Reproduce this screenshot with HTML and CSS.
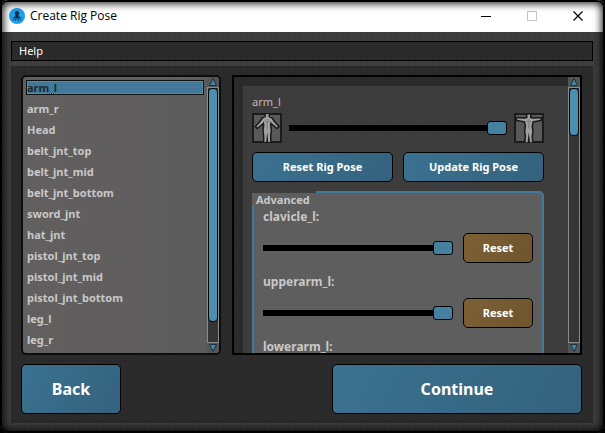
FILE: index.html
```html
<!DOCTYPE html>
<html lang="en">
<head>
<meta charset="utf-8">
<title>Create Rig Pose</title>
<link rel="stylesheet" href="styles.css">
</head>
<body>
<div class="window">
  <header class="titlebar">
    <svg class="logo" viewBox="0 0 16 16" aria-hidden="true">
      <circle cx="8" cy="8" r="8" fill="#1ba1ee"/>
      <path d="M8 3a2.300 2.300 0 0 0-2 3.500L6.800 8 5 10.500h6L9.200 8l.8-1.500A2.300 2.300 0 0 0 8 3Z" fill="#0b3048"/>
      <path d="M6.500 8.500 3.500 10M9.500 8.500l3 1.500M4 12.500l1.500-2M6.500 13l.5-2.500M9.500 13 9 10.500M12 12.500l-1.500-2" stroke="#0b405f" stroke-width="1"/>
    </svg>
    <h1 class="title">Create Rig Pose</h1>
    <button class="winbtn" aria-label="Minimize"><svg viewBox="0 0 11 11"><path d="M0 5.500h10" stroke="#000"/></svg></button>
    <button class="winbtn" aria-label="Maximize" disabled><svg viewBox="0 0 11 11"><path d="M.5.500h9v9h-9z" fill="none" stroke="#c4c4c4"/></svg></button>
    <button class="winbtn" aria-label="Close"><svg viewBox="0 0 11 11"><path d="M.5.500l9 9M9.500.500l-9 9" stroke="#000" stroke-width="1.200"/></svg></button>
  </header>
  <nav class="menubar"><button class="menu">Help</button></nav>
  <main class="panel">
    <div class="columns">
      <section class="joints">
        <ul class="list" role="listbox" aria-label="Joints">
          <li class="item selected" role="option" aria-selected="true"><span>arm_l</span></li>
          <li class="item" role="option">arm_r</li>
          <li class="item" role="option">Head</li>
          <li class="item" role="option">belt_jnt_top</li>
          <li class="item" role="option">belt_jnt_mid</li>
          <li class="item" role="option">belt_jnt_bottom</li>
          <li class="item" role="option">sword_jnt</li>
          <li class="item" role="option">hat_jnt</li>
          <li class="item" role="option">pistol_jnt_top</li>
          <li class="item" role="option">pistol_jnt_mid</li>
          <li class="item" role="option">pistol_jnt_bottom</li>
          <li class="item" role="option">leg_l</li>
          <li class="item" role="option">leg_r</li>
        </ul>
        <div class="scroll" aria-hidden="true">
          <svg class="arrow" viewBox="0 0 12 10"><path d="M6 1.500 9.500 8.500h-7z"/></svg>
          <div class="track"><div class="thumb long"></div></div>
          <svg class="arrow" viewBox="0 0 12 10"><path d="M6 8.500 2.500 1.500h7z"/></svg>
        </div>
      </section>
      <section class="editor">
        <div class="view">
          <div class="content">
            <label class="pose-name" for="pose">arm_l</label>
            <div class="pose-row">
              <svg class="figure" viewBox="0 0 30 30" aria-hidden="true">
                <path class="frame" d="M1 1h28v28H1z"/>
                <path class="outline" d="M14 1h2.500v3l3 1.500 2 3 4.500 5-1 1-5-4-1.500-2-.5 4 .7 5-.7 5v6.500h-1.800l-1-10-1 10h-1.800v-6.500l-.7-5 .7-5-.5-4-1.500 2-5 4-1-1 4.500-5 2-3 3-1.500z"/>
                <path class="body" d="M14 1h2.500v3l3 1.500 2 3 4.500 5-1 1-5-4-1.500-2-.5 4 .7 5-.7 5v6.500h-1.800l-1-10-1 10h-1.800v-6.500l-.7-5 .7-5-.5-4-1.500 2-5 4-1-1 4.500-5 2-3 3-1.500z"/>
                <path class="shade" d="M15.200 6v10M12.500 8l2.500 1 3-1"/>
              </svg>
              <input class="slider" id="pose" type="range" min="0" max="100" value="100">
              <svg class="figure" viewBox="0 0 30 30" aria-hidden="true">
                <path class="frame" d="M1 1h28v28H1z"/>
                <path class="outline" d="M13.500 1.500H16v3.500l2.500.7 8-.2v1.200l-8 1.500-1 5 .7 5-.7 5 .5 6h-2l-1.200-10-1.200 10h-2l.5-6-.7-5 .7-5-1-5-8-1.500V5.500l8 .2 2.400-.7z"/>
                <path class="body" d="M13.500 1.500H16v3.500l2.500.7 8-.2v1.200l-8 1.500-1 5 .7 5-.7 5 .5 6h-2l-1.200-10-1.200 10h-2l.5-6-.7-5 .7-5-1-5-8-1.500V5.500l8 .2 2.400-.7z"/>
                <path class="shade" d="M14.800 6v10M12.300 8l2.500 1 2.500-1"/>
              </svg>
            </div>
            <div class="actions">
              <button class="btn">Reset Rig Pose</button>
              <button class="btn">Update Rig Pose</button>
            </div>
            <div class="group" role="group" aria-labelledby="adv">
              <h2 class="group-title" id="adv">Advanced</h2>
              <div class="control">
                <label for="clavicle">clavicle_l:</label>
                <div class="control-row"><input class="slider" id="clavicle" type="range" min="0" max="100" value="100"><button class="btn reset">Reset</button></div>
              </div>
              <div class="control">
                <label for="upperarm">upperarm_l:</label>
                <div class="control-row"><input class="slider" id="upperarm" type="range" min="0" max="100" value="100"><button class="btn reset">Reset</button></div>
              </div>
              <div class="control">
                <label for="lowerarm">lowerarm_l:</label>
                <div class="control-row"><input class="slider" id="lowerarm" type="range" min="0" max="100" value="100"></div>
              </div>
            </div>
          </div>
        </div>
        <div class="scroll" aria-hidden="true">
          <svg class="arrow" viewBox="0 0 12 10"><path d="M6 1.500 9.500 8.500h-7z"/></svg>
          <div class="track"><div class="thumb short"></div></div>
          <svg class="arrow" viewBox="0 0 12 10"><path d="M6 8.500 2.500 1.500h7z"/></svg>
        </div>
      </section>
    </div>
    <footer class="footer">
      <button class="btn big back">Back</button>
      <button class="btn big continue">Continue</button>
    </footer>
  </main>
</div>
</body>
</html>
```
FILE: styles.css
```css
* { box-sizing: border-box; }

body {
  margin: 0;
  background: #000;
  font: 12px/16px "Noto Sans", "Open Sans", sans-serif;
  color: #c8c8c8;
}

button { font: inherit; color: inherit; padding: 0; border: 0; background: none; }

.window {
  position: relative;
  display: flex;
  flex-direction: column;
  height: 100vh;
  padding: 0 3px;
  background:
    repeating-linear-gradient(0deg, rgba(0, 0, 0, .07) 0 1px, transparent 1px 6px),
    repeating-linear-gradient(90deg, rgba(0, 0, 0, .07) 0 1px, transparent 1px 6px),
    #3e3e3e;
}

/* dark vignette around the window frame */
.window::after {
  content: "";
  position: absolute;
  inset: 0;
  pointer-events: none;
  border: 2px solid #000;
  border-radius: 8px;
  box-shadow: inset 0 0 8px 1px #000, 0 0 0 8px #000;
}

.titlebar {
  display: flex;
  align-items: center;
  height: 32px;
  padding: 0 2px 0 7px;
  margin: 0 -1px;
  background: #fff;
  color: #000;
}
.logo { width: 16px; height: 16px; margin-right: 5px; }
.title { flex: 1; margin: 0; font-family: "Open Sans", sans-serif; font-size: 12px; font-weight: 400; }
.winbtn { width: 46px; height: 30px; display: grid; place-items: center; }
.winbtn svg { width: 11px; height: 11px; }

.menubar {
  display: flex;
  height: 20px;
  margin: 9px 9px 5px 8px;
  border: 1px solid #000;
  background: rgba(28, 28, 28, .55);
}
.menu { padding: 0 7px; font-size: 11px; color: #fff; }

.panel {
  flex: 1;
  min-height: 0;
  display: flex;
  flex-direction: column;
  gap: 9px;
  margin: 0 9px 10px 8px;
  padding: 9px 11px 9px 10px;
  background: rgba(28, 28, 28, .55);
}

.columns {
  flex: 1;
  min-height: 0;
  display: grid;
  grid-template-columns: 4fr 7fr;
  gap: 11px;
}

.joints, .editor {
  display: flex;
  min-width: 0;
  min-height: 0;
  overflow: hidden;
  border: 2px solid #000;
}
.joints { border-color: #0b0d0f; border-radius: 5px; background: linear-gradient(90deg, #625f5f, #5d5c5c); }

.list { flex: 1; min-width: 0; margin: 0; padding: 0 3px; list-style: none; overflow: hidden; font-size: 11px; font-weight: 700; }
.item { display: flex; align-items: center; height: 21px; padding-left: 1px; }
.selected { padding: 0; }
.selected span {
  flex: 1;
  height: 15px;
  line-height: 13px;
  border: 1px solid #111;
  outline: 1px dotted #b98468;
  outline-offset: -2px;
  background: #42799a;
  color: #1e2830;
}

.scroll { width: 12px; display: flex; flex-direction: column; }
.arrow { display: block; height: 10px; background: #555; }
.arrow path { fill: #4384a5; stroke: #183444; stroke-width: 1; }
.track { flex: 1; min-height: 0; border: 1px solid #8a8a8a; background: #353535; }
.thumb { border: 1px solid #000; border-radius: 4px; background: #4b8fb0; }
.long { height: 92%; }
.short { height: 19%; }

.view { flex: 1; min-width: 0; overflow: hidden; padding: 9px 0 0 9px; }
.content {
  height: 500px;
  padding: 8px 24px 0 9px;
  background: rgba(90, 90, 90, .4);
}
.pose-name { display: block; font-size: 11px; color: #c4b5c2; }
.pose-row { display: flex; align-items: center; gap: 7px; margin-top: 3px; }
.figure { width: 30px; height: 30px; flex: none; }
.frame { fill: #5a5959; stroke: #1c1c1c; stroke-width: 2; }
.outline { fill: none; stroke: #181818; stroke-width: 3; }
.body { fill: #a0a0a0; }
.shade { fill: none; stroke: #7c7c7c; }

.slider {
  flex: 1;
  min-width: 0;
  height: 14px;
  margin: 0;
  appearance: none;
  background: linear-gradient(#000, #000) center / 100% 6px no-repeat;
}
.slider::-webkit-slider-thumb {
  appearance: none;
  width: 20px;
  height: 14px;
  border: 1px solid #000;
  border-radius: 3px;
  background: #4580a0;
}

.actions { display: grid; grid-template-columns: 1fr 1fr; gap: 10px; margin-top: 9px; }
.btn {
  height: 30px;
  border: 1px solid #000;
  border-radius: 5px;
  background: linear-gradient(120deg, #3b7290, #33627d);
  color: #fff;
  font-size: 11px;
  font-weight: 700;
}

.group {
  height: 300px;
  margin-top: 9px;
  padding: 0 9px;
  border: 2px solid #40799a;
  border-radius: 5px;
  background: #5f5e5e;
  font-weight: 700;
}
.group-title {
  width: 64px;
  height: 15px;
  margin: -2px 0 0 -11px;
  padding: 2px 0 0 4px;
  background: linear-gradient(#3e3e3e, #3e3e3e) 0 0 / 100% 2px no-repeat, #5f5e5e;
  font-size: 11px;
  font-weight: 700;
  line-height: 13px;
}
.control { height: 65px; padding-top: 3px; }
.control label { display: block; }
.control-row { display: flex; align-items: center; gap: 10px; margin-top: 8px; }
.reset { width: 70px; background: linear-gradient(120deg, #7d6036, #6f542c); }

.footer { display: grid; grid-template-columns: 100px 250px; justify-content: space-between; }
.big { height: 50px; font-size: 16px; }
```
